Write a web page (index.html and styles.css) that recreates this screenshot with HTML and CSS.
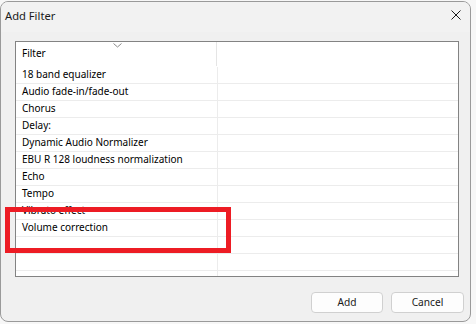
FILE: index.html
```html
<!DOCTYPE html>
<html lang="en">

<head>
    <meta charset="UTF-8">
    <meta name="viewport" content="width=device-width, initial-scale=1.0">
    <title>Add Filter</title>
    <link rel="stylesheet" href="styles.css">
</head>

<body>
    <div class="dialog">
        <div class="titlebar">
            <span class="title">Add Filter</span>
            <svg class="close" width="10" height="10" viewBox="0 0 10 10">
                <path d="M0.5 0.5 L9.5 9.5 M9.5 0.5 L0.5 9.5" stroke="#1a1a1a" stroke-width="1" fill="none"/>
            </svg>
        </div>
        <div class="content">
            <div class="list">
                <div class="header">
                    <div class="col col-name">
                        Filter
                        <svg class="sort" width="9" height="5" viewBox="0 0 9 5">
                            <path d="M0.5 0.5 L4.5 4 L8.5 0.5" stroke="#8a8a8a" stroke-width="1" fill="none"/>
                        </svg>
                    </div>
                    <div class="col"></div>
                </div>
                <div class="row"><div class="cell">18 band equalizer</div><div class="cell"></div></div>
                <div class="row"><div class="cell">Audio fade-in/fade-out</div><div class="cell"></div></div>
                <div class="row"><div class="cell">Chorus</div><div class="cell"></div></div>
                <div class="row"><div class="cell">Delay:</div><div class="cell"></div></div>
                <div class="row"><div class="cell">Dynamic Audio Normalizer</div><div class="cell"></div></div>
                <div class="row"><div class="cell">EBU R 128 loudness normalization</div><div class="cell"></div></div>
                <div class="row"><div class="cell">Echo</div><div class="cell"></div></div>
                <div class="row"><div class="cell">Tempo</div><div class="cell"></div></div>
                <div class="row"><div class="cell">Vibrato effect</div><div class="cell"></div></div>
                <div class="row"><div class="cell">Volume correction</div><div class="cell"></div></div>
                <div class="row"><div class="cell"></div><div class="cell"></div></div>
                <div class="row"><div class="cell"></div><div class="cell"></div></div>
                <div class="row"><div class="cell"></div><div class="cell"></div></div>
            </div>
            <div class="buttons">
                <button class="btn btn-add">Add</button>
                <button class="btn btn-cancel">Cancel</button>
            </div>
        </div>
        <!-- marca roja encima de la lista -->
        <div class="highlight"></div>
    </div>
</body>

</html>
```

FILE: styles.css
```css
body {
    margin: 0;
    background: #f7f7f7;
    font-family: "Noto Sans", "Open Sans", sans-serif;
    font-size: 10px;
    color: #000;
}
.dialog {
    position: relative;
    margin-top: 1px;
    width: 471px;
    height: 321px;
    box-sizing: border-box;
    border: 1px solid #9a9a9a;
    border-radius: 8px;
    background: #f0f0f0;
    overflow: hidden;
}
.titlebar {
    height: 30px;
    display: flex;
    align-items: center;
    justify-content: space-between;
    padding: 0 4px 0 4px;
    background: #f2f2f2;
}
.title {
    font-size: 11.2px;
    color: #1a1a1a;
    margin-top: -3px;
}
.close {
    margin-right: 5px;
    margin-top: -4px;
}
.content {
    padding: 9px 11px 0 14px;
}
.list {
    width: 444px;
    height: 236px;
    box-sizing: border-box;
    border: 1px solid #838383;
    background: #fff;
    overflow: hidden;
}
.header {
    display: flex;
    height: 25px;
}
.col {
    flex: 1;
}
.col-name {
    position: relative;
    flex: 0 0 201px;
    box-sizing: border-box;
    border-right: 1px solid #e5e5e5;
    padding-left: 6px;
    line-height: 22px;
    height: 24px;
}
.sort {
    position: absolute;
    left: 97px;
    top: 1px;
}
.row {
    display: flex;
    height: 17px;
    box-sizing: border-box;
    border-bottom: 1px solid #ececec;
}
.cell {
    flex: 1;
    line-height: 15px;
    white-space: nowrap;
}
.cell:first-child {
    flex: 0 0 202px;
    box-sizing: border-box;
    padding-left: 6px;
    border-right: 1px solid #ececec;
}
.buttons {
    display: flex;
    justify-content: flex-end;
    gap: 8px;
    margin-top: 15px;
    margin-right: -5px;
}
.btn {
    font-family: inherit;
    font-size: 10.2px;
    height: 21px;
    padding: 0;
    border: 1px solid #d0d0d0;
    border-radius: 4px;
    background: #fdfdfd;
    color: #1a1a1a;
    line-height: 17px;
}
.btn-add {
    width: 72px;
}
.btn-cancel {
    width: 73px;
}
.highlight {
    position: absolute;
    left: 4px;
    top: 205px;
    width: 226px;
    height: 46px;
    box-sizing: border-box;
    border: 5px solid #ed1c24;
}
```
